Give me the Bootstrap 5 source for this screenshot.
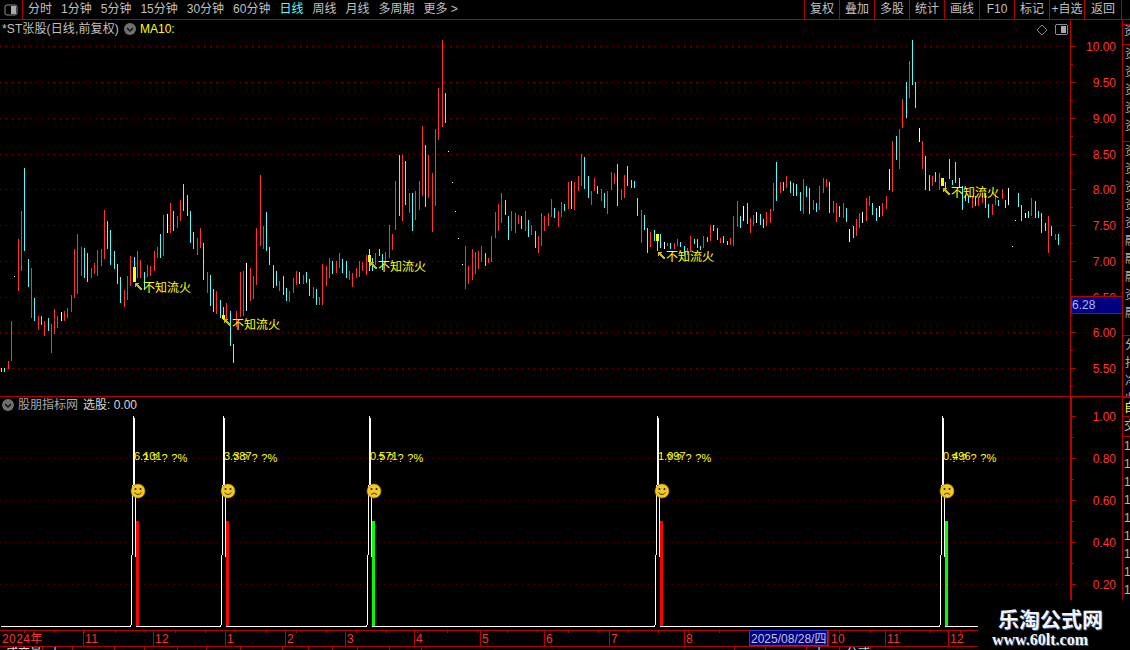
<!DOCTYPE html>
<html lang="zh-CN">
<head>
<meta charset="utf-8">
<title>股朋指标网</title>
<link href="https://cdn.jsdelivr.net/npm/bootstrap@5.3.0/dist/css/bootstrap.min.css" rel="stylesheet">
<style>
html,body{background:#000;margin:0;height:650px;overflow:hidden}
.term{width:1130px;height:650px;background:#000;color:#c0c0c0;font:12px/1 "Liberation Sans","Noto Sans CJK SC",sans-serif}
.topbar{height:20px;border-bottom:1px solid #b00000;flex:none}
.winbox{width:23px;border-right:1px solid #b00000;flex:none}
.tabs{gap:9px;padding-left:5px;line-height:19px;font-size:12px}
.tabs span{white-space:nowrap}
.tabs .on{color:#5ff}
.acts{margin-right:8px}
.acts span{width:35px;text-align:center;border-left:1px solid #b00000;line-height:19px}
.acts span:last-child{width:38px;border-right:1px solid #b00000}
.work{height:630px}
.plot{width:1122px;flex:none}
.plot svg{display:block}
.plot text{font-family:"Liberation Sans","Noto Sans CJK SC",sans-serif;font-size:12px}
.statusrow{height:4px;overflow:hidden;border-top:1px solid #b00000;flex:none}
.statusrow span{border-right:1px solid #b00000;height:6px;line-height:12px;padding-left:6px;white-space:nowrap;overflow:hidden;color:#ddd;flex:none}
.statusrow .blu{color:#5ff}
.strip{width:8px;flex:none;overflow:hidden;border-left:1px solid #b00000;color:#b8b8b8}
.strip div{overflow:hidden;white-space:nowrap;padding-left:1px;flex:none}
.seg{height:18px;line-height:18px}
.lines{border-bottom:1px solid #b00000}
.stamp{position:absolute;left:978px;top:600px;width:152px;height:50px;background:#000;text-align:center;color:#f4f4f4}
.stamp b{display:block}
.stamp .cn{font:700 21px/25px "Noto Sans CJK SC",sans-serif;padding:6px 28px 0 20px;white-space:nowrap;letter-spacing:0;text-shadow:1px 1px 0 #3a5f9a}
.stamp .en{font:700 16px/17px "Liberation Serif",serif;padding-right:28px;text-shadow:1px 1px 0 #3a5f9a}
</style>
</head>
<body>
<div class="term position-relative d-flex flex-column">
  <div class="topbar d-flex">
    <div class="winbox d-flex align-items-center justify-content-center">
      <svg width="14" height="12" viewBox="0 0 14 12"><rect x="1" y="1" width="12" height="10" rx="2" fill="none" stroke="#8a8a8a"/><rect x="7" y="2" width="5" height="8" fill="#aaa"/></svg>
    </div>
    <div class="tabs d-flex flex-grow-1">
      <span>分时</span><span>1分钟</span><span>5分钟</span><span>15分钟</span><span>30分钟</span><span>60分钟</span><span class="on">日线</span><span>周线</span><span>月线</span><span>多周期</span><span>更多 &gt;</span>
    </div>
    <div class="acts d-flex">
      <span>复权</span><span>叠加</span><span>多股</span><span>统计</span><span>画线</span><span>F10</span><span>标记</span><span>+自选</span><span>返回</span>
    </div>
  </div>
  <div class="work d-flex">
    <div class="plot d-flex flex-column">
      <svg id="up" width="1122" height="377" viewBox="0 20 1122 377" shape-rendering="crispEdges"></svg>
      <svg id="low" width="1122" height="233" viewBox="0 397 1122 233" shape-rendering="crispEdges"></svg>
      <svg id="dates" width="1122" height="16" viewBox="0 630 1122 16" shape-rendering="crispEdges"></svg>
      <div class="statusrow d-flex">
        <span style="width:43px">成交量</span><span style="width:30px">十</span><span style="width:42px"></span><span style="width:30px"></span><span style="width:33px"></span><span style="width:29px"></span><span style="width:34px"></span><span style="width:42px"></span><span style="width:26px"></span><span style="width:24px"></span><span style="width:25px"></span><span style="width:32px"></span><span style="width:32px"></span><span style="width:313px"></span><span style="width:31px"></span><span style="width:41px"></span><span style="width:33px">十</span><span class="blu" style="width:31px">公式</span>
      </div>
    </div>
    <aside class="strip d-flex flex-column">
      <div style="height:5px" class="lines"></div>
      <div style="height:20px" class="lines">资</div>
      <div class="lines d-flex flex-column" style="height:97px">
        <div class="seg">资</div><div class="seg">资</div><div class="seg">资</div><div class="seg">资</div><div class="seg">资</div>
      </div>
      <div class="lines d-flex flex-column" style="height:194px">
        <div class="seg">资</div><div class="seg">资</div><div class="seg">资</div><div class="seg">资</div><div class="seg">资</div><div class="seg">融</div><div class="seg">融</div><div class="seg">融</div><div class="seg">资</div><div class="seg">融</div>
      </div>
      <div class="d-flex flex-column" style="height:60px">
        <div class="seg">分</div><div class="seg">扣</div><div class="seg">净</div><div class="seg">收</div>
      </div>
      <div style="height:21px;line-height:20px;color:#ff0;border-top:2px solid #b00000;border-bottom:1px solid #b00000">自</div>
      <div style="height:20px;line-height:19px;border-bottom:1px solid #b00000">交</div>
      <div class="seg">1</div><div class="seg">1</div><div class="seg">1</div><div class="seg">1</div><div class="seg">1</div><div class="seg">1</div><div class="seg">1</div><div class="seg">1</div><div class="seg">1</div>
    </aside>
  </div>
  <div class="stamp"><b class="cn">乐淘公式网</b><b class="en">www.60lt.com</b></div>
</div>
<script>
var NS='http://www.w3.org/2000/svg';
var COL={r:'#ff3232',c:'#54fcfc',w:'#ffffff'},AX='#b80000';
function el(p,n,a,t){var e=document.createElementNS(NS,n);for(var k in a)e.setAttribute(k,a[k]);if(t!=null)e.textContent=t;p.appendChild(e);return e}
function txt(p,x,y,s,fill,extra){var a={x:x,y:y,fill:fill,'dominant-baseline':'central','shape-rendering':'auto'};for(var k in extra||{})a[k]=extra[k];return el(p,'text',a,s)}
var up=document.getElementById('up'),low=document.getElementById('low'),dates=document.getElementById('dates');

/* price grid */
var ys=[46,82,118,154,189,225,261,297,332,368],labs=['10.00','9.50','9.00','8.50','8.00','7.50','7.00','6.50','6.00','5.50'];
ys.forEach(function(y,i){
  el(up,'line',{x1:0,x2:1068,y1:y+.5,y2:y+.5,stroke:'#900000','stroke-dasharray':'1 5'});
  el(up,'rect',{x:1071,y:y,width:5,height:1,fill:AX});
  el(up,'rect',{x:1071,y:y+18,width:2,height:1,fill:AX});
  txt(up,1116,y+1,labs[i],'#ff3232',{'text-anchor':'end'});
});

/* candles: origin x, origin y, then 3x-crop coordinates */
var sets=[
[0,160,'4c625,638 13c625,638 25r603,627 34r484,603 43w349,351 55r237,393 64r153,333 73c24,273 85c297,381 94r324,474 103c414,483 115r468,510 124c468,495 133r484,528 145c474,513 154r492,579 163r447,522 172r468,504 184w456,483 193r453,483 202r444,474 214r405,456 223r267,414 232r222,402 244r261,348 253c264,354 262c279,366 274r324,354 283r309,342 292r270,348 304r267,318 313r150,297 322c183,267 331c210,315 343c273,327 352c312,372 361c351,429 373r390,441 382r348,420 391r288,378 403c291,354 412r273,354 421r300,354 433c336,390 442r315,351 451r318,348 463r273,333 472r261,294 481c222,294 490r165,288 502w162,219 511r129,219 520c153,213 532r168,204 541r120,183 550c72,153 562c105,168 571c153,249 580c216,267 592r234,285 601r204,264 610c249,360 622r336,399 631c345,438 640c387,456 649r393,462 661c420,474 670c441,480 679r429,480 691c453,558 700c552,609 709r453,500 721r336,470 730r333,468 739w309,453 751r324,423 760r348,417 769r204,375 781r45,258 790r198,267 799c156,273 808c261,315 820c315,384 829c333,378 838r363,393 850c348,405 859c384,423 868r393,426 880r354,399 889r333,375 898c336,372'],
[300,30,'10r735,762 19c726,759 28c747,798 40r771,804 49c777,825 58r801,825 67r702,825 79r708,768 88r684,744 97c693,732 109r693,729 118r669,714 127c687,729 139c693,744 148r723,750 157r729,771 169r714,744 178r693,741 187r696,723 199r675,735 208c657,723 217c684,723 226r669,705 238c657,678 247c672,720 256r666,705 268r585,684 277r612,660 286r453,600 298c375,558 307r375,573 316c393,525 328r489,549 337c489,603 346r483,570 358r453,540 367r288,498 376c345,531 385r375,504 397r429,606 406r297,528 415r174,330 427r30,291 436c189,279 445w364,367 457w457,460 466w544,547 475w625,628 487w703,706 496r648,777 505r708,762 517r657,750 526r666,732 535r663,717 544r648,696 556c669,708 565r684,699 574r618,696 586r546,624 595r522,603 604r489,579 616c510,555 625c558,630 634r543,603 646r549,609 655r555,582 664c558,597 676r543,603 685c570,621 694r585,615 706c603,654 715r618,669 724r549,648 733r558,603 745r549,588 754r507,561 763c534,564 775r543,591 784r516,561 793c522,543 805r456,537 814c453,537 823r456,540 835r438,483 844r372,468 853c381,477 865c438,504 874r483,525 883r444,483 892c468,492'],
[600,140,'4r147,183 13c159,204 22r153,222 34r96,150 43r99,132 52c72,198 64r147,180 73r105,174 82c78,138 94c120,144 103c123,144 112c174,228 124r210,309 133c225,270 142c264,339 151r276,321 163c270,303 172c282,333 181c282,324 193w306,327 202r309,318 211c309,328 223r309,328 232r297,318 241c306,321 253c318,345 262r324,345 271r288,335 283c297,312 292c297,324 301c318,330 310r288,324 322c291,306 331r255,303 340c255,273 352c264,300 361r294,309 370c288,309 382c303,315 391r294,315 400r228,318 412r183,261 421c228,264 430w198,243 442c189,252 451r234,279 460r225,258 469w216,249 481c222,255 490c237,264 499r216,258 511r207,249 520r129,213 529c66,183 541r126,159 550c126,153 559r108,144 571c123,159 580c129,168 589c132,168 601c156,213 610r117,222 619c138,171 628c144,222 640r180,210 649c189,216 658r138,210 670r114,159 679r117,141 688c126,219 700r183,219 709r189,246 718c198,231'],
[840,30,'10r519,564 19c534,576 28w597,636 40c588,624 49r567,618 58r549,594 67w546,579 79r504,573 88r498,528 97c519,555 109c534,573 118w528,561 127r519,558 139r498,537 148w417,480 157r333,486 169c318,390 178r297,417 187r207,294 199c156,264 208r93,204 217c30,165 226c156,234 238w294,336 247r333,417 256c378,480 268c435,483 277r438,468 286c426,456 298r429,480 316c456,474 328c387,447 337c450,465 346c396,459 358c444,475 367c468,540 376c495,513 385c498,519 397r498,534 406c498,528 415r500,528 427r490,520 436c490,534 445c522,564 457r522,555 466r490,525 475c510,528 487r477,507 496c510,534 505w474,525 517w648,651 526w570,573 535c489,531 544c525,573 556w549,564 565c543,564 574r504,558 586c513,564 595c543,564 604c549,609 616c579,603 625r558,669 634c588,618 646r612,630 655c612,645']
];
sets.forEach(function(s){
  s[2].split(' ').forEach(function(t){
    var m=t.match(/(\d+)([rcw])(\d+),(\d+)/);
    el(up,'rect',{x:Math.floor(s[0]+m[1]/3),y:Math.round(s[1]+m[3]/3),width:1,height:Math.max(1,Math.round((m[4]-m[3])/3)),fill:COL[m[2]]});
  });
});

/* 不知流火 markers */
[[133,267,15,143,288,286],[222,315,4,232,325,322],[368,255,7,378,267,265],[656,234,7,666,257,255],[941,178,8,951,193,191]].forEach(function(a){
  el(up,'rect',{x:a[0],y:a[1],width:3,height:a[2],fill:'#ffff00'});
  var ax=a[3]-8,ay=a[5]-3;
  el(up,'path',{d:'M'+ax+' '+ay+'l4 0l-1 1l4 5l-1 1l-5 -4l-1 1z',fill:'#c8c400'});
  txt(up,a[3],a[4],'不知流火','#ffff00');
});

/* upper chrome */
txt(up,2,29,'*ST张股(日线,前复权)','#c0c0c0',{style:'letter-spacing:.12px'});
el(up,'circle',{cx:130,cy:29,r:6,fill:'#707070','shape-rendering':'auto'});
el(up,'path',{d:'M127 28l3 3l3 -3',fill:'none',stroke:'#111','stroke-width':1.5,'shape-rendering':'auto'});
txt(up,140,29,'MA10:','#ffff00');
el(up,'path',{d:'M1042 25l5 5l-5 5l-5 -5z',fill:'none',stroke:'#888','shape-rendering':'auto'});
el(up,'rect',{x:1055.5,y:24.5,width:12,height:10,rx:2,fill:'none',stroke:'#8a8a8a'});
el(up,'rect',{x:1061,y:26,width:5,height:7,fill:'#aaa'});

/* axis */
el(up,'rect',{x:1070,y:20,width:1,height:376,fill:AX});
el(up,'rect',{x:0,y:396,width:1122,height:1,fill:AX});
el(up,'rect',{x:1071,y:296,width:51,height:17,fill:'#000080',stroke:AX});
txt(up,1072,304.5,'6.28','#b4b4ff');

/* lower panel */
var base=626,sig=[[134,'#ff0000',0,'6.101'],[224,'#ff0000',0,'3.387'],[370,'#00ff00',1,'0.571'],[658,'#ff0000',0,'1.097'],[943,'#00ff00',1,'0.496']];
[458,500,542,584].forEach(function(y){el(low,'line',{x1:0,x2:1068,y1:y+.5,y2:y+.5,stroke:'#6e0000','stroke-dasharray':'1 5'})});
var pts='1,'+base;sig.forEach(function(s){pts+=' '+(s[0]-3)+','+base+' '+s[0]+',416 '+(s[0]+3)+','+base});pts+=' 1068,'+base;
el(low,'polyline',{points:pts,fill:'none',stroke:'#fff','stroke-width':1});
sig.forEach(function(s){
  el(low,'rect',{x:s[0]+2,y:521,width:3,height:105,fill:s[1]});
  txt(low,s[0],456,s[3],'#ffff00',{style:'font-size:11px'});
  txt(low,s[0]+8,458,'? ? ? ?%','#ffff00',{style:'font-size:11px;word-spacing:.6px'});
  var cx=s[0]+4,cy=491,g=el(low,'g',{'shape-rendering':'auto'});
  el(g,'circle',{cx:cx,cy:cy,r:7,fill:'#f4c81e',stroke:'#a88a10','stroke-width':.6});
  el(g,'circle',{cx:cx-2.5,cy:cy-2,r:1,fill:'#222'});el(g,'circle',{cx:cx+2.5,cy:cy-2,r:1,fill:'#222'});
  el(g,'path',{d:s[2]?'M'+(cx-3)+' '+(cy+3.5)+'q3 -3 6 0':'M'+(cx-3.5)+' '+(cy+1.5)+'q3.5 4 7 0',fill:'none',stroke:'#222','stroke-width':.9});
});
txt(low,18,405,'股朋指标网','#a8a8a8');
txt(low,83,405,'选股: 0.00','#d8d8d8');
el(low,'circle',{cx:8,cy:405,r:6,fill:'#707070','shape-rendering':'auto'});
el(low,'path',{d:'M5 404l3 3l3 -3',fill:'none',stroke:'#111','stroke-width':1.5,'shape-rendering':'auto'});
el(low,'rect',{x:1070,y:397,width:2,height:233,fill:AX});
[416,458,500,542,584].forEach(function(y,i){
  el(low,'rect',{x:1072,y:y,width:4,height:1,fill:AX});
  el(low,'rect',{x:1072,y:y+21,width:2,height:1,fill:AX});
  txt(low,1116,y+1,['1.00','0.80','0.60','0.40','0.20'][i],'#ff3232',{'text-anchor':'end'});
});

/* date axis */
el(dates,'rect',{x:0,y:630,width:1122,height:1,fill:AX});
for(var tx=24;tx<978;tx+=30.2){el(dates,'rect',{x:Math.round(tx),y:631,width:1,height:2,fill:AX})}
[[2,'2024年',0],[85,'11',83],[155,'12',153],[227,'1',225],[287,'2',285],[347,'3',345],[416,'4',414],[482,'5',480],[546,'6',544],[611,'7',609],[686,'8',684],[831,'10',828],[887,'11',885],[950,'12',948]].forEach(function(d){
  if(d[2])el(dates,'rect',{x:d[2],y:631,width:1,height:15,fill:AX});
  txt(dates,d[0],639,d[1],'#ff3232',{style:'letter-spacing:.4px'});
});
el(dates,'rect',{x:749.5,y:630.5,width:78,height:15,fill:'#000080',stroke:'#3a3ad0'});
txt(dates,751,639,'2025/08/28/四','#c0c0e0');
</script>
<script src="https://cdn.jsdelivr.net/npm/bootstrap@5.3.0/dist/js/bootstrap.bundle.min.js"></script>
</body>
</html>
